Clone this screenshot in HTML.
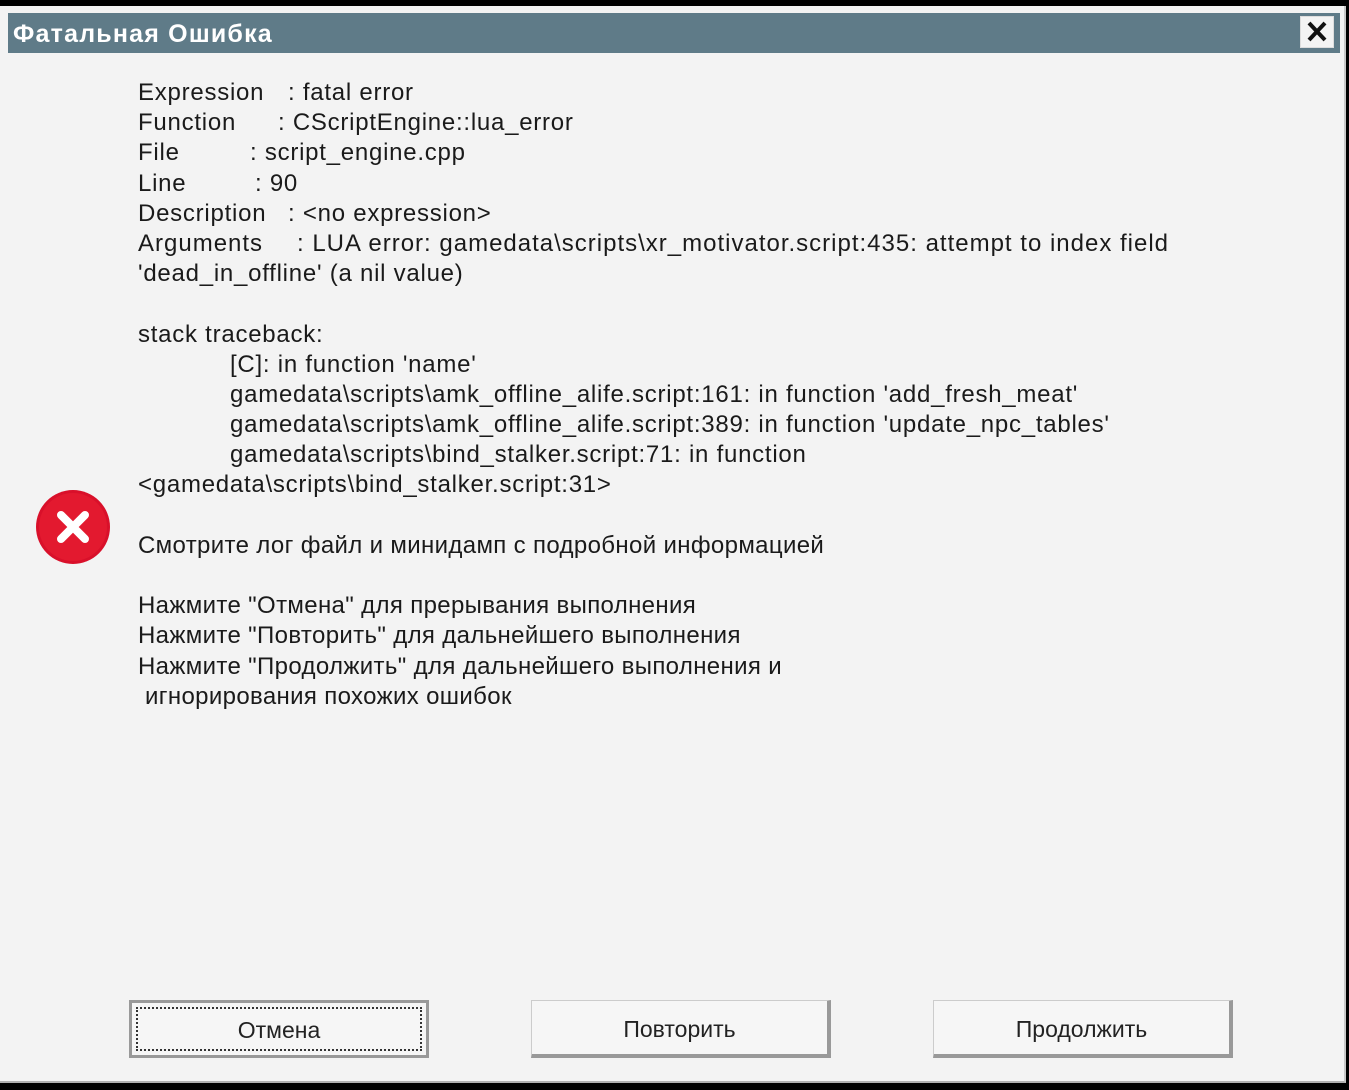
<!DOCTYPE html>
<html><head><meta charset="utf-8"><style>
html,body{margin:0;padding:0;width:1349px;height:1090px;overflow:hidden;background:#000}
.win{position:absolute;left:0;top:6px;width:1346px;height:1077px;background:#f3f3f3;border-right:2px solid #c8c8c8;border-bottom:2px solid #b0b0b0;box-sizing:border-box}
.title{position:absolute;left:8px;top:7px;width:1332px;height:40px;background:#5f7b88}
.title span{position:absolute;left:5px;top:7px;color:#fff;font:bold 25px "Liberation Sans","Noto Sans CJK SC",sans-serif;letter-spacing:1.2px}
.close{position:absolute;left:1292px;top:3px;width:34px;height:32px;background:#f3f3f3;border:1px solid #ddd;box-sizing:border-box}
.txt{position:absolute;left:138px;top:72px;font:24px "Liberation Sans","Noto Sans CJK SC",sans-serif;letter-spacing:0.75px;color:#1a1a1a;line-height:30.2px}
.txt div{height:30.2px;position:relative;white-space:pre}
.ru{letter-spacing:0.35px}
.c{position:absolute}
.btn{position:absolute;top:994px;width:300px;height:58px;background:#f6f6f6;border:1px solid #ccc;border-right:4px solid #999;border-bottom:4px solid #999;box-sizing:border-box;font:23px "Liberation Sans","Noto Sans CJK SC",sans-serif;color:#222;text-align:center;line-height:56px}
.btn.f{border:3px solid #999}
.btn.f .in{position:absolute;left:4px;top:4px;right:4px;bottom:4px;border:2px dotted #333;line-height:42px}
</style></head><body>
<div class="win">
<div class="title"><span>Фатальная Ошибка</span>
<div class="close"><svg width="32" height="30" viewBox="0 0 32 30"><path d="M8 6L24 23M24 6L8 23" stroke="#111" stroke-width="4"/></svg></div></div>
<svg style="position:absolute;left:35px;top:484px" width="76" height="76" viewBox="0 0 76 76"><circle cx="38" cy="37" r="37" fill="#d9102a"/><circle cx="38" cy="37" r="34" fill="#e3192f"/><path d="M26 25L50 49M50 25L26 49" stroke="#fff" stroke-width="8" stroke-linecap="round"/></svg>
<div class="txt"><div>Expression<span class="c" style="left:150px">: fatal error</span></div><div>Function<span class="c" style="left:140px">: CScriptEngine::lua_error</span></div><div>File<span class="c" style="left:112px">: script_engine.cpp</span></div><div>Line<span class="c" style="left:117px">: 90</span></div><div>Description<span class="c" style="left:150px">: &lt;no expression&gt;</span></div><div style="letter-spacing:1px">Arguments<span class="c" style="left:159px">: LUA error: gamedata\scripts\xr_motivator.script:435: attempt to index field</span></div><div>'dead_in_offline' (a nil value)</div><div></div><div>stack traceback:</div><div><span class="c" style="left:92px">[C]: in function 'name'</span></div><div><span class="c" style="left:92px">gamedata\scripts\amk_offline_alife.script:161: in function 'add_fresh_meat'</span></div><div><span class="c" style="left:92px">gamedata\scripts\amk_offline_alife.script:389: in function 'update_npc_tables'</span></div><div><span class="c" style="left:92px">gamedata\scripts\bind_stalker.script:71: in function</span></div><div>&lt;gamedata\scripts\bind_stalker.script:31&gt;</div><div></div><div class="ru">Смотрите лог файл и минидамп с подробной информацией</div><div></div><div class="ru">Нажмите "Отмена" для прерывания выполнения</div><div class="ru">Нажмите "Повторить" для дальнейшего выполнения</div><div class="ru">Нажмите "Продолжить" для дальнейшего выполнения и</div><div class="ru"> игнорирования похожих ошибок</div></div>
<div class="btn f" style="left:129px"><div class="in">Отмена</div></div>
<div class="btn" style="left:531px">Повторить</div>
<div class="btn" style="left:933px">Продолжить</div>
</div>
</body></html>
